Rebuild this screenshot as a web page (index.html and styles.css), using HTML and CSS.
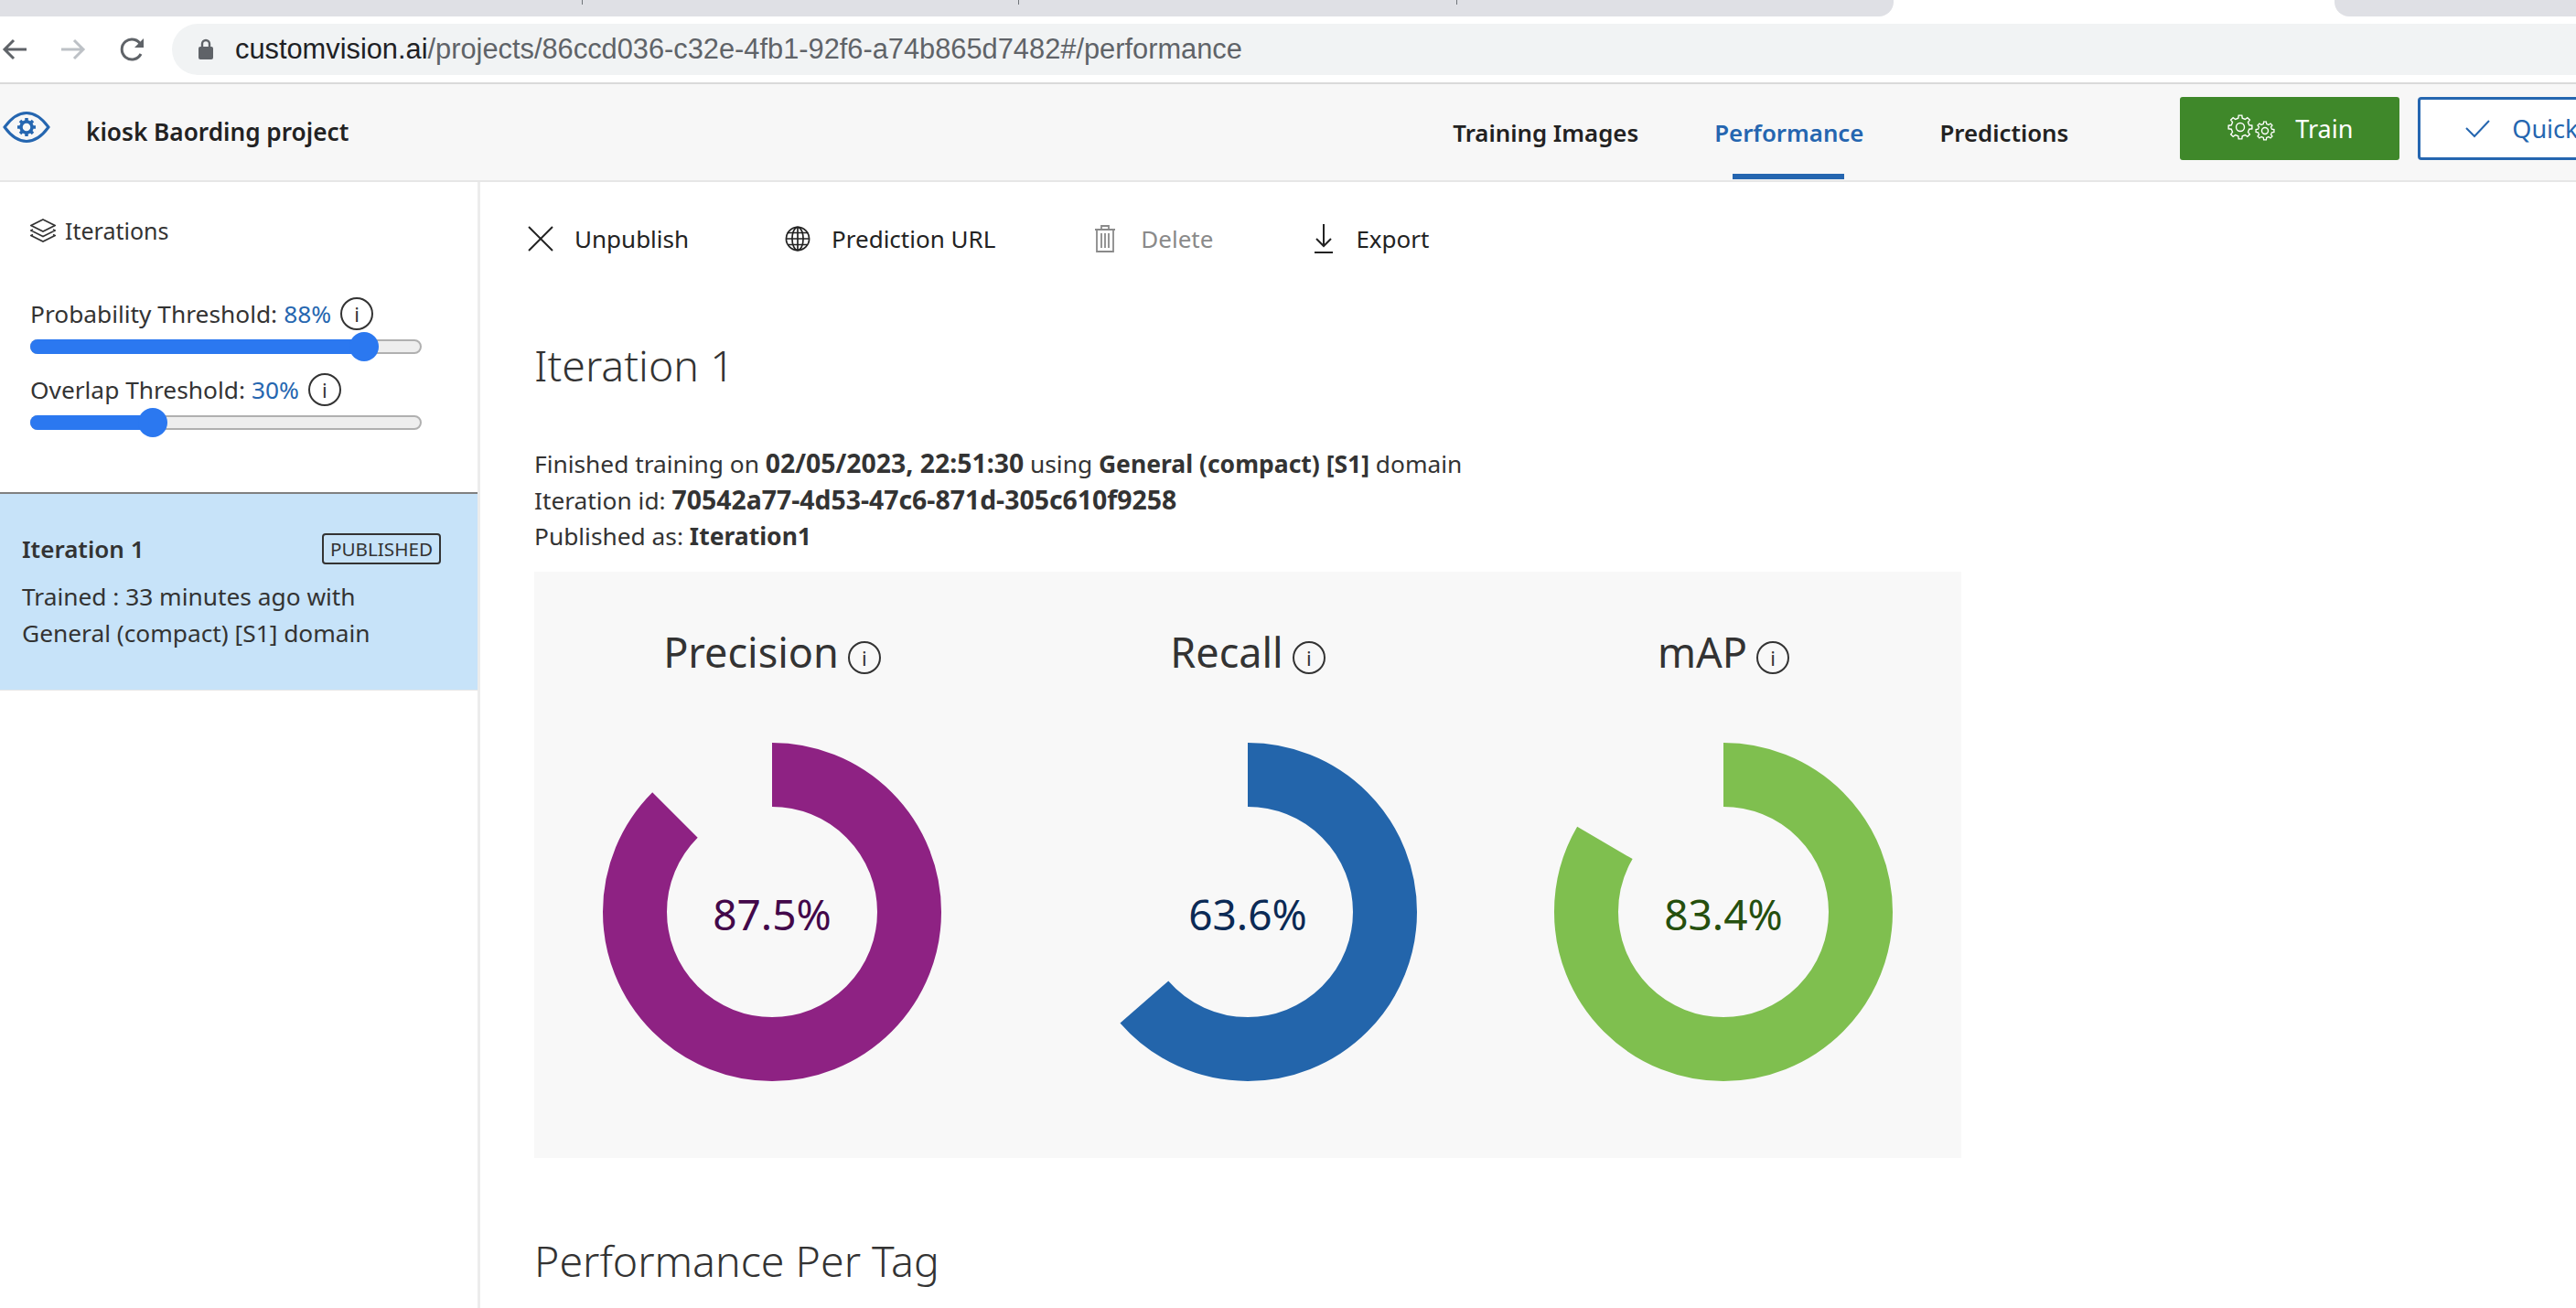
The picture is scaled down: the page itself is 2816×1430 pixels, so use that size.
FILE: index.html
```html
<!DOCTYPE html>
<html lang="en">
<head>
    <meta charset="UTF-8">
    <title>Custom Vision - Performance</title>
    <link rel="stylesheet" href="styles.css">
</head>
<body>
    <!-- Browser chrome -->
    <div class="tabstrip">
        <div class="tab-group tab-group-left">
            <span class="tab-sep"></span>
            <span class="tab-sep"></span>
            <span class="tab-sep"></span>
        </div>
        <div class="tab-active"></div>
        <div class="tab-group tab-group-right"></div>
    </div>
    <div class="toolbar">
        <svg class="nav-icon" width="28" height="28" viewBox="0 0 28 28"><path d="M27 14H3M13 4 3 14l10 10" fill="none" stroke="#5f6368" stroke-width="3"/></svg>
        <svg class="nav-icon nav-forward" width="28" height="28" viewBox="0 0 28 28"><path d="M1 14h24M15 4l10 10-10 10" fill="none" stroke="#bdc1c6" stroke-width="3"/></svg>
        <svg class="nav-icon nav-reload" width="30" height="30" viewBox="0 0 30 30"><path d="M24 20a11 11 0 1 1 0-10" fill="none" stroke="#5f6368" stroke-width="3"/><path d="M27 3v10H17z" fill="#5f6368"/></svg>
        <div class="omnibox">
            <svg class="lock" width="18" height="24" viewBox="0 0 18 24"><path d="M5 10V6a4 4 0 0 1 8 0v4" fill="none" stroke="#5f6368" stroke-width="2.4"/><rect x="1" y="9" width="16" height="14" rx="2" fill="#5f6368"/></svg>
            <span class="url"><span class="url-host">customvision.ai</span>/projects/86ccd036-c32e-4fb1-92f6-a74b865d7482#/performance</span>
        </div>
    </div>

    <!-- App header -->
    <header class="app-header">
        <svg class="logo" width="52" height="36" viewBox="0 0 52 36">
            <path d="M2 18 C10 7 18 2.500 26 2.500 S42 7 50 18 C42 29 34 33.500 26 33.500 S10 29 2 18Z" fill="none" stroke="#2566b0" stroke-width="3"/>
            <circle cx="26" cy="18" r="6" fill="none" stroke="#2566b0" stroke-width="3.500"/>
            <path d="M26 8v4M26 24v4M16 18h4M32 18h4M19 11l3 3M30 22l3 3M33 11l-3 3M22 22l-3 3" stroke="#2566b0" stroke-width="3.500"/>
        </svg>
        <span class="project-name">kiosk Baording project</span>
        <nav class="tabs">
            <a class="tab">Training Images</a>
            <a class="tab tab-current">Performance</a>
            <a class="tab">Predictions</a>
        </nav>
        <button class="btn-train">
            <svg width="52" height="34" viewBox="0 0 52 34" fill="none" stroke="#fff" stroke-width="1.400">
                <defs>
                    <polygon id="gear" points="9.74,-2.25 12.87,-1.81 12.87,1.81 9.74,2.25 8.48,5.30 10.38,7.82 7.82,10.38 5.30,8.48 2.25,9.74 1.81,12.87 -1.81,12.87 -2.25,9.74 -5.30,8.48 -7.82,10.38 -10.38,7.82 -8.48,5.30 -9.74,2.25 -12.87,1.81 -12.87,-1.81 -9.74,-2.25 -8.48,-5.30 -10.38,-7.82 -7.82,-10.38 -5.30,-8.48 -2.25,-9.74 -1.81,-12.87 1.81,-12.87 2.25,-9.74 5.30,-8.48 7.82,-10.38 10.38,-7.82 8.48,-5.30"/>
                </defs>
                <use href="#gear" transform="translate(14 15)"/>
                <circle cx="14" cy="15" r="4.500"/>
                <use href="#gear" transform="translate(41 19) scale(.77)" stroke-width="1.700"/>
                <circle cx="41" cy="19" r="3.500"/>
            </svg>
            <span>Train</span>
        </button>
        <button class="btn-quick">
            <svg width="27" height="20" viewBox="0 0 27 20"><path d="M1 9l9 9L26 1" fill="none" stroke="#2566b0" stroke-width="2"/></svg>
            <span>Quick</span>
        </button>
    </header>

    <div class="page">
        <!-- Left column -->
        <aside class="sidebar">
            <div class="side-title">
                <svg width="28" height="26" viewBox="0 0 28 26" fill="none" stroke="#333" stroke-width="1.600"><path d="M14 1 27 7.500 14 14 1 7.500Z"/><path d="M3 12 1 13l13 6.500 13-6.500-2-1"/><path d="M3 17.500 1 18.500l13 6.500 13-6.500-2-1"/></svg>
                <span>Iterations</span>
            </div>

            <div class="threshold">
                <div class="threshold-label">Probability Threshold: <span class="blue">88%</span>
                    <span class="info"><i>i</i></span>
                </div>
                <div class="slider">
                    <div class="slider-fill fill-prob"></div>
                    <div class="slider-thumb"></div>
                </div>
            </div>
            <div class="threshold">
                <div class="threshold-label">Overlap Threshold: <span class="blue">30%</span>
                    <span class="info"><i>i</i></span>
                </div>
                <div class="slider">
                    <div class="slider-fill fill-overlap"></div>
                    <div class="slider-thumb"></div>
                </div>
            </div>

            <div class="iter-card">
                <div class="iter-head">
                    <b>Iteration 1</b>
                    <span class="badge">PUBLISHED</span>
                </div>
                <div class="iter-text">Trained : 33 minutes ago with<br>General (compact) [S1] domain</div>
            </div>
        </aside>

        <!-- Main content -->
        <main class="main">
            <div class="actions">
                <a class="action action-unpublish">
                    <svg width="30" height="30" viewBox="0 0 30 30"><path d="M2 2l26 26M28 2 2 28" stroke="#222" stroke-width="2"/></svg>
                    Unpublish
                </a>
                <a class="action action-url">
                    <svg width="28" height="28" viewBox="0 0 30 30" fill="none" stroke="#222" stroke-width="1.800"><circle cx="15" cy="15" r="13.500"/><ellipse cx="15" cy="15" rx="6.500" ry="13.500"/><path d="M15 1.500v27M1.500 15h27M3.500 8h23M3.500 22h23"/></svg>
                    Prediction URL
                </a>
                <a class="action action-delete">
                    <svg width="24" height="30" viewBox="0 0 24 30" fill="none" stroke="#8a8a8a" stroke-width="1.800"><path d="M1 5h22M8 5V1h8v4M3 5v24h18V5M8 9v16M12 9v16M16 9v16"/></svg>
                    Delete
                </a>
                <a class="action action-export">
                    <svg width="22" height="32" viewBox="0 0 22 32" fill="none" stroke="#222" stroke-width="2"><path d="M11 0v24M3 16l8 8 8-8M1 31h20"/></svg>
                    Export
                </a>
            </div>

            <h1 class="iter-title">Iteration 1</h1>

            <div class="meta">
                <div>Finished training on <b class="num">02/05/2023, 22:51:30</b> using <b>General (compact) [S1]</b> domain</div>
                <div>Iteration id: <b class="num">70542a77-4d53-47c6-871d-305c610f9258</b></div>
                <div>Published as: <b>Iteration1</b></div>
            </div>

            <section class="charts">
                <div class="chart">
                    <h2 class="chart-title">Precision <span class="info"><i>i</i></span></h2>
                    <div class="donut">
                        <svg width="370" height="370" viewBox="0 0 370 370"><circle class="ring ring-precision" cx="185" cy="185" r="150" pathLength="100" stroke-dasharray="87.5 100"/></svg>
                        <span class="donut-value value-precision">87.5%</span>
                    </div>
                </div>
                <div class="chart">
                    <h2 class="chart-title">Recall <span class="info"><i>i</i></span></h2>
                    <div class="donut">
                        <svg width="370" height="370" viewBox="0 0 370 370"><circle class="ring ring-recall" cx="185" cy="185" r="150" pathLength="100" stroke-dasharray="63.6 100"/></svg>
                        <span class="donut-value value-recall">63.6%</span>
                    </div>
                </div>
                <div class="chart">
                    <h2 class="chart-title">mAP <span class="info"><i>i</i></span></h2>
                    <div class="donut">
                        <svg width="370" height="370" viewBox="0 0 370 370"><circle class="ring ring-map" cx="185" cy="185" r="150" pathLength="100" stroke-dasharray="83.4 100"/></svg>
                        <span class="donut-value value-map">83.4%</span>
                    </div>
                </div>
            </section>

            <h1 class="tag-title">Performance Per Tag</h1>
        </main>
    </div>
</body>
</html>
```

FILE: styles.css
```css
body {
    margin: 0;
    width: 2816px;
    height: 1430px;
    overflow: hidden;
    background-color: #fff;
    color: #333;
    font-family: "Noto Sans", "Open Sans", sans-serif;
}

/* Browser chrome */
.tabstrip {
    display: flex;
    height: 18px;
    background-color: #fff;
}

.tab-group {
    position: relative;
    background-color: #dfe0e5;
}

.tab-group-left {
    width: 2070px;
    border-bottom-right-radius: 16px;
}

.tab-group-right {
    flex: 1;
    border-bottom-left-radius: 16px;
}

.tab-active {
    width: 482px;
}

.tab-sep {
    position: absolute;
    top: 0;
    width: 1px;
    height: 5px;
    background-color: #70757a;
}

.tab-sep:nth-child(1) { left: 636px; }
.tab-sep:nth-child(2) { left: 1113px; }
.tab-sep:nth-child(3) { left: 1592px; }

.toolbar {
    display: flex;
    align-items: center;
    height: 72px;
    border-bottom: 2px solid #dadada;
}

.nav-icon {
    flex: none;
    margin-left: 2px;
}

.nav-forward {
    margin-left: 36px;
}

.nav-reload {
    margin-left: 36px;
}

.omnibox {
    display: flex;
    align-items: center;
    flex: 1;
    height: 56px;
    margin-left: 28px;
    padding-left: 28px;
    background-color: #f1f3f4;
    border-radius: 28px 0 0 28px;
}

.url {
    margin-left: 23px;
    color: #5f6368;
    font-family: "Liberation Sans", Arial, sans-serif;
    font-size: 30.8px;
    white-space: nowrap;
}

.url-host {
    color: #202124;
}

/* App header */
.app-header {
    display: flex;
    align-items: center;
    height: 105px;
    background-color: #f7f7f7;
    border-bottom: 2px solid #e6e6e6;
    white-space: nowrap;
}

.logo {
    flex: none;
    margin-left: 3px;
    margin-top: -12px;
}

.project-name {
    margin-left: 39px;
    margin-top: -2px;
    font-size: 26.2px;
    font-weight: 600;
    color: #222;
}

.tabs {
    display: flex;
    margin-left: 1207px;
    align-self: stretch;
}

.tab {
    position: relative;
    display: flex;
    align-items: center;
    margin-right: 83px;
    font-size: 25.8px;
    font-weight: 600;
    color: #222;
}

.tab:last-child {
    margin-right: 0;
}

.tab-current {
    color: #2566b0;
}

.tab-current::after {
    content: "";
    position: absolute;
    left: 20px;
    right: 21px;
    bottom: 1px;
    height: 6px;
    background-color: #2566b0;
}

.btn-train, .btn-quick {
    display: flex;
    align-items: center;
    flex: none;
    box-sizing: border-box;
    height: 69px;
    margin-top: -8px;
    font-family: inherit;
    font-size: 27px;
    white-space: nowrap;
}

.btn-train {
    width: 240px;
    margin-left: 122px;
    padding: 0 0 0 52px;
    background-color: #3f882a;
    color: #fff;
    border: none;
    border-radius: 3px;
}

.btn-train span {
    margin-left: 22px;
}

.btn-quick {
    width: 300px;
    margin-left: 20px;
    padding: 0 0 0 49px;
    background-color: #fff;
    color: #2566b0;
    border: 3px solid #2566b0;
    border-radius: 4px;
}

.btn-quick span {
    margin-left: 24px;
}

/* Page columns */
.page {
    display: flex;
}

.sidebar {
    flex: none;
    width: 522px;
    height: 1231px;
    border-right: 3px solid #ececec;
    font-size: 26.3px;
}

.side-title {
    display: flex;
    align-items: center;
    gap: 10px;
    padding: 36px 0 0 33px;
    font-size: 25px;
    height: 34px;
}

.threshold {
    padding: 0 0 0 33px;
    width: 428px;
}

.side-title + .threshold {
    margin-top: 55px;
}

.threshold-label {
    display: flex;
    align-items: center;
    gap: 7px;
    height: 38px;
}

.blue {
    color: #2566b0;
}

.info {
    display: inline-flex;
    align-items: center;
    justify-content: center;
    box-sizing: border-box;
    width: 36px;
    height: 36px;
    margin-left: 3px;
    border: 2.5px solid #333;
    border-radius: 50%;
    font-family: "Noto Sans", sans-serif;
    font-size: 22px;
    font-weight: 400;
}

.info i {
    font-style: normal;
}

.slider {
    position: relative;
    box-sizing: border-box;
    height: 16px;
    margin: 9px 0 20px;
    background-color: #eee;
    border: 2px solid #b0b0b0;
    border-radius: 8px;
}

.slider-fill {
    height: 16px;
    margin: -2px 0 0 -2px;
    background-color: #2b78f0;
    border-radius: 8px;
}

.fill-prob { width: 365px; }
.fill-overlap { width: 134px; }

.slider-thumb {
    position: absolute;
    top: -10px;
    width: 32px;
    height: 32px;
    background-color: #2b78f0;
    border-radius: 50%;
}

.threshold:nth-of-type(2) .slider-thumb { left: 347px; }
.threshold:nth-of-type(3) .slider-thumb { left: 116px; }

.iter-card {
    box-sizing: border-box;
    height: 217px;
    margin-top: 68px;
    padding: 40px 25px 0 24px;
    background-color: #c7e3f9;
    border-top: 2px solid #808080;
    border-bottom: 1px solid #e6e6e6;
    color: #333;
}

.iter-head {
    display: flex;
    align-items: center;
    justify-content: space-between;
    height: 40px;
}

.iter-head b {
    font-size: 26px;
    font-weight: 600;
}

.badge {
    box-sizing: border-box;
    display: flex;
    align-items: center;
    justify-content: center;
    width: 130px;
    height: 34px;
    margin-right: 15px;
    border: 2px solid #333;
    border-radius: 4px;
    font-size: 20.7px;
}

.iter-text {
    margin-top: 12px;
    line-height: 40px;
}

.main {
    flex: none;
    width: 1560px;
    padding-left: 59px;
}

.actions {
    display: flex;
    align-items: center;
    height: 60px;
    margin: 32px 0 0 -8px;
    font-size: 26px;
    color: #222;
}

.action {
    display: flex;
    align-items: center;
    gap: 22px;
}

.action-url { margin-left: 105px; gap: 23px; }
.action-delete { margin-left: 108px; gap: 27px; color: #8a8a8a; }
.action-export { margin-left: 110px; gap: 24px; }

.iter-title, .tag-title {
    margin: 0;
    font-size: 46.5px;
    font-weight: 300;
    line-height: 64px;
    color: #333;
}

.iter-title {
    margin-top: 76px;
}

.meta {
    margin-top: 55px;
    font-size: 26.3px;
    line-height: 40px;
}

.meta div {
    height: 40px;
}

.meta b {
    font-size: 26.5px;
}

.meta b.num {
    font-size: 28.4px;
}

.charts {
    display: grid;
    grid-template-columns: repeat(3, 1fr);
    height: 641px;
    margin-top: 19px;
    background-color: #f8f8f8;
}

.chart {
    display: flex;
    flex-direction: column;
    align-items: center;
}

.chart-title {
    display: flex;
    align-items: center;
    margin: 54px 0 0;
    height: 66px;
    font-size: 45px;
    font-weight: 400;
}

.chart-title .info {
    margin: 14px 0 0 10px;
    border-width: 2px;
}

.donut {
    position: relative;
    margin-top: 67px;
}

.donut svg {
    display: block;
}

.ring {
    fill: none;
    stroke-width: 70;
    transform: rotate(-90deg);
    transform-origin: center;
}

.ring-precision { stroke: #8e2283; }
.ring-recall { stroke: #2365ab; }
.ring-map { stroke: #7fbf4f; }

.donut-value {
    position: absolute;
    left: 0;
    right: 0;
    top: 155px;
    text-align: center;
    font-size: 46px;
    line-height: 64px;
}

.value-precision { color: #43084a; }
.value-recall { color: #0b2a55; }
.value-map { color: #254f0e; }

.tag-title {
    margin-top: 80px;
}
```
